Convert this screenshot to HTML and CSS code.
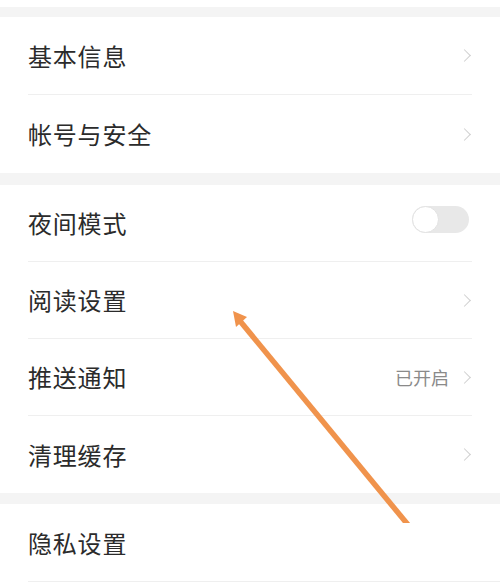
FILE: index.html
```html
<!DOCTYPE html>
<html lang="zh-CN">

<head>
    <meta charset="UTF-8">
    <meta name="viewport" content="width=device-width, initial-scale=1.0">
    <title>设置</title>

    <link rel="stylesheet" href="styles.css">
</head>

<body>

    <div class="top-rest"></div>

    <div class="gap first"></div>
    <div class="group account">
        <div class="item">
            <span class="label">基本信息</span>
            <span class="chevron"></span>
        </div>
        <div class="item last">
            <span class="label">帐号与安全</span>
            <span class="chevron"></span>
        </div>
    </div>

    <div class="gap wide-gap"></div>
    <div class="group">
        <div class="item">
            <span class="label">夜间模式</span>
            <span class="switch"><span class="knob"></span></span>
        </div>
        <div class="item">
            <span class="label">阅读设置</span>
            <span class="chevron"></span>
        </div>
        <div class="item">
            <span class="label">推送通知</span>
            <span class="value">已开启</span>
            <span class="chevron"></span>
        </div>
        <div class="item last">
            <span class="label">清理缓存</span>
            <span class="chevron"></span>
        </div>
    </div>

    <div class="gap"></div>
    <div class="group">
        <div class="item wide">
            <span class="label">隐私设置</span>
        </div>
    </div>

    <!-- annotation arrow drawn over the page -->
    <svg class="arrow" width="500" height="523" viewBox="0 0 500 523">
        <line x1="409" y1="526" x2="240" y2="321" stroke="#f0934c" stroke-width="5.5" />
        <polygon points="233,311 247,317 236,327" fill="#f0934c" />
    </svg>

</body>

</html>
```

FILE: styles.css
```css
body {
    margin: 0;
    background: #fff;
    font-family: "Noto Sans CJK SC", "Noto Sans", sans-serif;
    color: #2b2b2b;
    position: relative;
}

.top-rest {
    height: 7px;
}

.gap {
    height: 11px;
    background: #f4f4f4;
}

.gap.first {
    height: 10px;
}

.gap.wide-gap {
    height: 12px;
}

.group {
    background: #fff;
}

.item {
    display: flex;
    align-items: center;
    height: 77px;
    margin: 0 28px;
    border-bottom: 1px solid #efefef;
    box-sizing: border-box;
}

.account .item {
    height: 78px;
}

.item.last {
    border-bottom: none;
}

.item.wide {
    height: 78px;
    margin-right: 0;
}

.label {
    flex: 1;
    font-size: 24px;
    line-height: 1;
    letter-spacing: 0.8px;
    color: #2b2b2b;
}

.value {
    font-size: 18px;
    color: #8a8a8a;
    margin-right: 11px;
}

/* light grey > */
.chevron {
    width: 8px;
    height: 8px;
    border-top: 1.5px solid #cfcfcf;
    border-right: 1.5px solid #cfcfcf;
    transform: rotate(45deg);
    margin-right: 3px;
}

.switch {
    display: flex;
    align-items: center;
    width: 57px;
    height: 27px;
    border-radius: 14px;
    background: #e8e8e8;
    margin-right: 3px;
    margin-bottom: 8px;
}

.knob {
    width: 25px;
    height: 25px;
    border-radius: 50%;
    background: #fff;
    border: 1px solid #e2e2e2;
}

.arrow {
    position: absolute;
    top: 0;
    left: 0;
    overflow: hidden;
}
```
